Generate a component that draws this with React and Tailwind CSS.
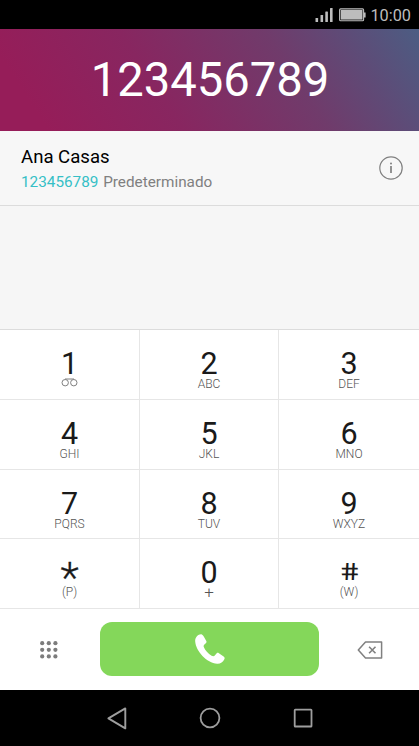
const keys = [
  { digit: '1', voicemail: true },
  { digit: '2', letters: 'ABC' },
  { digit: '3', letters: 'DEF' },
  { digit: '4', letters: 'GHI' },
  { digit: '5', letters: 'JKL' },
  { digit: '6', letters: 'MNO' },
  { digit: '7', letters: 'PQRS' },
  { digit: '8', letters: 'TUV' },
  { digit: '9', letters: 'WXYZ' },
  { digit: '*', letters: '(P)' },
  { digit: '0', letters: '+' },
  { digit: '#', letters: '(W)' },
]

const digitStyles = {
  '*': 'h-[27px] pt-[3px] text-[43px] leading-[30px] font-light [-webkit-text-stroke:0.3px_#1a1a1a]',
  '#': 'h-[27px] text-[24px] leading-[26px] scale-x-[1.3] skew-x-[9deg]',
}

const letterStyles = {
  '+': '-mt-[1px] text-[17px]',
  '(P)': '-mt-[1px] text-[12px]',
  '(W)': '-mt-[1px] text-[12px]',
}

function StatusBar() {
  return (
    <div className="flex h-[29px] shrink-0 items-center justify-end bg-black pr-[8px] text-[#bdbdbd]">
      <svg width="18" height="16" viewBox="0 0 18 16" fill="currentColor" className="mr-[6px]">
        <rect x="0.5" y="11" width="2.6" height="4" rx="0.5" />
        <rect x="5.5" y="8" width="2.6" height="7" rx="0.5" />
        <rect x="10.3" y="4.5" width="2.6" height="10.5" rx="0.5" />
        <rect x="15" y="1" width="2.6" height="14" rx="0.5" />
      </svg>
      <svg width="27" height="14" viewBox="0 0 27 14" className="mr-[4.5px]">
        <rect x="0.6" y="0.9" width="24" height="11.8" rx="1" fill="none" stroke="currentColor" strokeWidth="1.1" />
        <rect x="1.7" y="2" width="21.8" height="9.6" fill="currentColor" />
        <rect x="25" y="4.5" width="1.6" height="5" fill="currentColor" />
      </svg>
      <span className="mt-[3px] text-[16.3px] leading-none">10:00</span>
    </div>
  )
}

function Key({ digit, letters, voicemail }) {
  return (
    <button className="flex flex-col items-center border-r border-b border-[#e6e6e6] pt-[20px] nth-[3n]:border-r-0">
      <span className={digitStyles[digit] || 'h-[27px] text-[30.5px] leading-[27px]'}>{digit}</span>
      {voicemail ? (
        <svg width="17" height="9" viewBox="0 0 17 9" fill="none" stroke="#808080" strokeWidth="1" className="mt-[1px]">
          <circle cx="4.2" cy="4.7" r="3.2" />
          <circle cx="12.8" cy="4.7" r="3.2" />
          <path d="M4 1H13" />
        </svg>
      ) : (
        <span className={`leading-[14px] font-light text-[#555] ${letterStyles[letters] || 'text-[12px]'}`}>
          {letters}
        </span>
      )}
    </button>
  )
}

export default function App() {
  return (
    <div className="flex h-[746px] w-[419px] flex-col overflow-hidden bg-white font-[Roboto,sans-serif] text-[#1a1a1a]">
      <StatusBar />

      <div className="flex h-[101.5px] shrink-0 items-center justify-center bg-[linear-gradient(57deg,#961d59_10%,#882660_38%,#703b6b_68%,#5e4b77_84%,#4c5d83_100%)]">
        <span className="mt-[2px] ml-[1px] text-[47.2px] leading-none text-white">123456789</span>
      </div>

      <div className="flex h-[75.5px] shrink-0 items-center justify-between border-b border-[#dcdcdc] bg-[#f7f7f7] pr-[16px] pl-[21px]">
        <div className="pt-[3px]">
          <p className="text-[18.6px] leading-[26px] text-black">Ana Casas</p>
          <p className="text-[15.3px] leading-[25px] text-[#808080]">
            <span className="mr-px text-[#35bfc6]">123456789</span> Predeterminado
          </p>
        </div>
        <svg width="24" height="24" viewBox="0 0 24 24" fill="none" stroke="#808080">
          <circle cx="12" cy="12" r="11.2" strokeWidth="1.2" />
          <path d="M12 10V17" strokeWidth="1.7" />
          <circle cx="12" cy="7.5" r="1" fill="#808080" stroke="none" />
        </svg>
      </div>

      <div className="h-[124px] shrink-0 border-b border-[#dcdcdc] bg-[#f6f6f6]" />

      <div className="grid h-[279px] shrink-0 grid-cols-[140px_139px_140px] grid-rows-[70px_70px_69px_70px]">
        {keys.map((key) => (
          <Key key={key.digit} {...key} />
        ))}
      </div>

      <div className="flex h-[81px] shrink-0 items-center">
        <div className="flex w-[98px] justify-center">
          <svg width="18" height="18" viewBox="0 0 18 18" fill="#7c7c7c">
            {[2.2, 8.8, 15.4].map((y) => [2.2, 8.8, 15.4].map((x) => (
              <circle key={`${x}-${y}`} cx={x} cy={y} r="2.1" />
            )))}
          </svg>
        </div>
        <button className="mb-[1px] ml-[2px] flex h-[54px] w-[219px] items-center justify-center rounded-[12px] bg-[#84d75a]">
          <svg width="30" height="31" viewBox="0 0 30 31" fill="#fff">
            <path d="M1.2 3.2C2.3 1.4 4.8 0 6.8.4C7.8.6 8.7 2.3 9.6 3.9L11.3 7.1C11.9 8.2 11.3 9 10.3 9.7C8.9 10.8 8.3 11.6 8.8 13.1C10 16.3 13.2 19.9 16.6 21.8C18.2 22.7 19.2 22.3 20.2 21L21.7 19.2C22.4 18.5 23.1 18.7 23.9 19.2L28.6 22.4C29.9 23.3 29.9 24.2 29.2 25.5C27.9 28.1 25.5 30 22.2 29.8C11.7 29 .9 17.2.2 7.5C.1 5.8.3 4.5 1.2 3.2Z" />
          </svg>
        </button>
        <div className="flex w-[100px] justify-center pr-[1px] pl-[3px]">
          <svg width="26" height="18" viewBox="0 0 26 18" fill="none" stroke="#808080" strokeWidth="1.5">
            <path d="M8.5.9H24.6V17.1H8.5L1.3 9Z" strokeLinejoin="round" />
            <path d="M12.1 5.8L18.5 12.2M18.5 5.8L12.1 12.2" strokeWidth="1.6" />
          </svg>
        </div>
      </div>

      <div className="flex h-[56px] shrink-0 items-center bg-black pl-[107px] text-[#9e9e9e]">
        <svg width="20" height="23" viewBox="0 0 20 23" fill="none" stroke="currentColor" strokeWidth="1.9" strokeLinejoin="round">
          <path d="M18.3 1.4V21.4L1.4 11.4Z" />
        </svg>
        <svg width="22" height="22" viewBox="0 0 22 22" fill="none" stroke="currentColor" strokeWidth="1.8" className="ml-[72px]">
          <circle cx="11" cy="11" r="9.4" />
        </svg>
        <svg width="20" height="20" viewBox="0 0 20 20" fill="none" stroke="currentColor" strokeWidth="1.8" className="ml-[72px]">
          <rect x="1.7" y="1.7" width="16.8" height="16.8" rx="0.6" />
        </svg>
      </div>
    </div>
  )
}
